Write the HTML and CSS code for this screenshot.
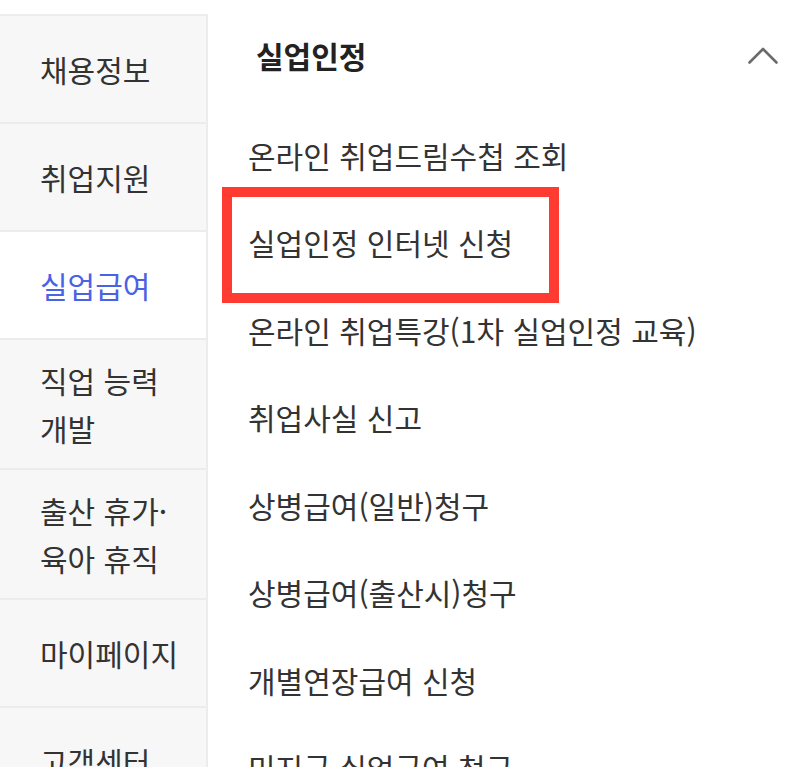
FILE: index.html
```html
<!DOCTYPE html>
<html lang="ko">
<head>
  <meta charset="UTF-8">
  <meta name="viewport" content="width=device-width, initial-scale=1">
  <title>실업급여 메뉴</title>
  <link rel="stylesheet" href="styles.css">
</head>
<body>
  <div class="menu-page">
    <!-- 1차 메뉴 -->
    <ul class="side-menu">
      <li class="side-item">채용정보</li>
      <li class="side-item">취업지원</li>
      <li class="side-item active">실업급여</li>
      <li class="side-item">직업 능력 개발</li>
      <li class="side-item">출산 휴가· 육아 휴직</li>
      <li class="side-item">마이페이지</li>
      <li class="side-item">고객센터</li>
    </ul>

    <!-- 2차 메뉴 -->
    <div class="sub-menu">
      <div class="sub-title">
        <span>실업인정</span>
        <svg class="chevron" width="30" height="17" viewBox="0 0 30 17" aria-hidden="true">
          <polyline points="1.5,15.5 15,2 28.5,15.5" fill="none" stroke="#6b6b6b" stroke-width="2.6" stroke-linecap="round" stroke-linejoin="round"/>
        </svg>
      </div>
      <ul class="sub-list">
        <li class="sub-item">온라인 취업드림수첩 조회</li>
        <li class="sub-item highlighted">실업인정 인터넷 신청</li>
        <li class="sub-item">온라인 취업특강(1차 실업인정 교육)</li>
        <li class="sub-item">취업사실 신고</li>
        <li class="sub-item">상병급여(일반)청구</li>
        <li class="sub-item">상병급여(출산시)청구</li>
        <li class="sub-item">개별연장급여 신청</li>
        <li class="sub-item">미지급 실업급여 청구</li>
      </ul>
    </div>
  </div>
</body>
</html>
```

FILE: styles.css
```css
/* Base */
body {
  margin: 0;
  padding-top: 14px;
  background: #fff;
  font-family: "Noto Sans CJK KR", "Noto Sans", sans-serif;
  color: #333;
}
ul {
  list-style: none;
  margin: 0;
  padding: 0;
}
.menu-page {
  display: flex;
  height: 753px;
  overflow: hidden;
}

/* Side menu */
.side-menu {
  width: 206px;
  flex-shrink: 0;
  background: #f7f7f7;
  border-top: 2px solid #ececec;
  border-right: 2px solid #ececec;
}
.side-item {
  display: flex;
  align-items: center;
  min-height: 108px;
  box-sizing: border-box;
  padding: 16px 8px 16px 40px;
  border-bottom: 2px solid #ececec;
  font-size: 30px;
  line-height: 48px;
  word-break: keep-all;
  color: #333;
}
.side-item.active {
  background: #fff;
  color: #4a62e6;
}

/* Sub menu */
.sub-menu {
  flex: 1;
}
.sub-title {
  display: flex;
  align-items: center;
  justify-content: space-between;
  height: 82px;
  padding: 0 29px 0 48px;
  font-size: 30px;
  font-weight: bold;
  color: #222;
}
.chevron {
  display: block;
}
.sub-list {
  margin-top: 15px;
}
.sub-item {
  position: relative;
  display: flex;
  align-items: center;
  height: 87.5px;
  padding-left: 40px;
  font-size: 30px;
  color: #333;
  white-space: nowrap;
}

/* Red annotation box */
.highlighted::after {
  content: "";
  position: absolute;
  left: 14px;
  top: -12px;
  width: 337px;
  height: 116px;
  box-sizing: border-box;
  border: 10px solid #ff3a31;
}
```
